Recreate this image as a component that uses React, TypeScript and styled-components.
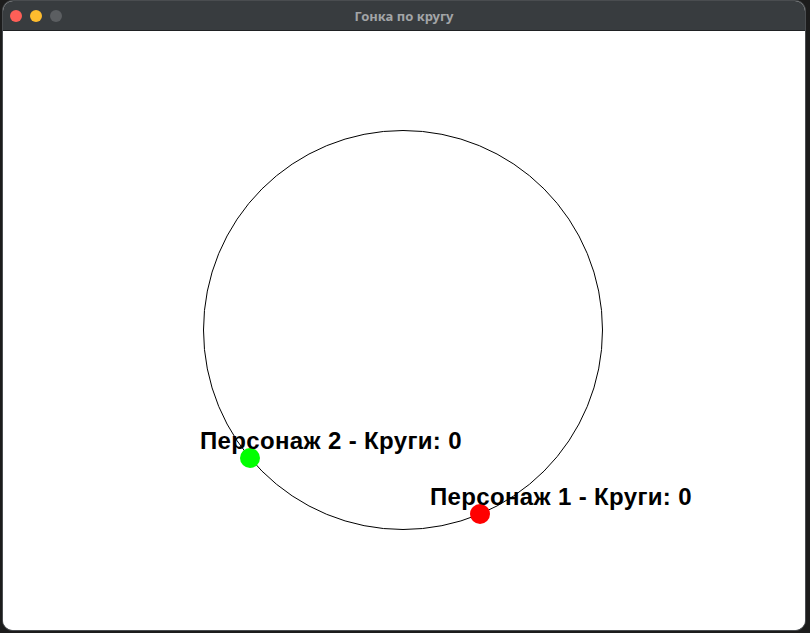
import React from "react";
import styled, { createGlobalStyle } from "styled-components";

const Global = createGlobalStyle`
  html, body { margin: 0; padding: 0; background: #1c1c1c; width: 810px; height: 633px; overflow: hidden; }
  #root { width: 810px; height: 633px; }
`;

const Screen = styled.div`
  width: 810px;
  height: 633px;
  box-sizing: border-box;
  padding: 1px 5px 3px 3px;
  display: flex;
`;

const Window = styled.div`
  flex: 1;
  display: flex;
  flex-direction: column;
  border-radius: 10px;
  overflow: hidden;
  background: #ffffff;
  box-shadow: 0 0 0 1px #4a4d50;
`;

const TitleBar = styled.div`
  height: 29px;
  flex: none;
  background: #383c3f;
  border-bottom: 1px solid #1f2123;
  display: flex;
  align-items: center;
  position: relative;
  padding-left: 7px;
  gap: 8px;
`;

const Light = styled.span<{ $c: string }>`
  width: 12px;
  height: 12px;
  border-radius: 50%;
  background: ${(p) => p.$c};
`;

const Title = styled.div`
  position: absolute;
  left: 0;
  right: 0;
  top: 0;
  bottom: 0;
  display: flex;
  align-items: center;
  justify-content: center;
  font-family: "Noto Sans", "DejaVu Sans", sans-serif;
  font-weight: 700;
  font-size: 13px;
  color: #a3a5a7;
  pointer-events: none;
`;

const Canvas = styled.div`
  flex: 1;
  position: relative;
  background: #ffffff;
`;

const Track = styled.svg`
  position: absolute;
  left: 0;
  top: 0;
  width: 100%;
  height: 100%;
`;

const Label = styled.div<{ $x: number; $y: number }>`
  position: absolute;
  left: ${(p) => p.$x}px;
  top: ${(p) => p.$y}px;
  font-family: "Liberation Sans", Arial, sans-serif;
  font-weight: 700;
  font-size: 24px;
  letter-spacing: 0.35px;
  line-height: 1;
  color: #000;
  white-space: nowrap;
`;

// Canvas origin is at screen (3, 31)
const OX = 3;
const OY = 31;

const players = [
  { name: "Персонаж 1", laps: 0, x: 480, y: 514, color: "#ff0000" },
  { name: "Персонаж 2", laps: 0, x: 250, y: 458, color: "#00ff00" },
];

export default function App() {
  return (
    <>
      <Global />
      <Screen>
        <Window>
          <TitleBar>
            <Light $c="#fe5f57" />
            <Light $c="#febc2e" />
            <Light $c="#5b5e61" />
            <Title>Гонка по кругу</Title>
          </TitleBar>
          <Canvas>
            <Track>
              <circle cx={403 - OX} cy={330 - OY} r={199.5} fill="none" stroke="#000" strokeWidth={1} />
              {players.map((p) => (
                <circle key={p.name} cx={p.x - OX} cy={p.y - OY} r={10} fill={p.color} />
              ))}
            </Track>
            {players.map((p) => (
              <Label key={p.name} $x={p.x - 50 - OX} $y={p.y - 29 - OY}>
                {p.name} - Круги: {p.laps}
              </Label>
            ))}
          </Canvas>
        </Window>
      </Screen>
    </>
  );
}
